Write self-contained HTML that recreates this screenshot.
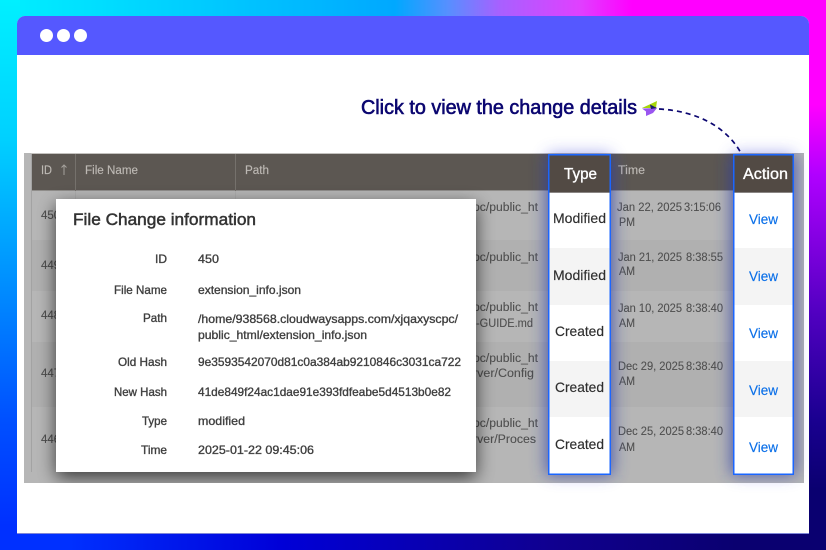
<!DOCTYPE html>
<html><head><meta charset="utf-8"><title>File Change</title>
<style>
html,body{margin:0;padding:0;width:826px;height:550px;overflow:hidden;background:#000}
svg{display:block;position:absolute;left:0;top:0}
text{font-family:"Liberation Sans",sans-serif}
.strip{position:absolute}
.g{fill:#4f4f4f;font-size:11.5px;stroke:#4f4f4f;stroke-width:.1}
.l{fill:#3f3f3f;font-size:12px;stroke:#3f3f3f;stroke-width:.35;text-anchor:end}
.v{fill:#3f3f3f;font-size:12px;stroke:#3f3f3f;stroke-width:.35}
.c{fill:#2e2e2e;font-size:14px;stroke:#2e2e2e;stroke-width:.15}
.w{fill:#0a6fe8;font-size:14px;stroke:#0a6fe8;stroke-width:.15}
.h{fill:#bdb9b4;font-size:11.5px;stroke:#bdb9b4;stroke-width:.15}
</style></head>
<body>
<div class="strip" style="left:0;top:0;width:826px;height:20px;background:linear-gradient(90deg,#00f0ff 0,#00a8ff 395px,#5590ff 447px,#a860ff 500px,#e040ff 580px,#ff00ff 632px,#ff00ff 826px)"></div>
<div class="strip" style="left:0;top:0;width:20px;height:550px;background:linear-gradient(180deg,#00f0ff 0,#00d0ff 140px,#0090ff 280px,#0050ff 420px,#0030ff 526px,#0030ff 550px)"></div>
<div class="strip" style="left:805px;top:0;width:21px;height:550px;background:linear-gradient(180deg,#ff00ff 0,#ff00ff 105px,#b000ff 175px,#5000c0 315px,#1a0090 420px,#0a0070 490px,#0a0070 550px)"></div>
<div class="strip" style="left:0;top:530px;width:826px;height:20px;background:linear-gradient(90deg,#0030ff 0,#0030ff 70px,#0000d8 280px,#100090 550px,#0a0070 737px,#0a0070 826px)"></div>

<svg width="826" height="550" viewBox="0 0 826 550" xmlns="http://www.w3.org/2000/svg">
<defs>
<filter id="m" x="-20%" y="-20%" width="140%" height="140%"><feGaussianBlur stdDeviation="9"/></filter>
<filter id="b" x="-80%" y="-20%" width="260%" height="140%"><feGaussianBlur stdDeviation="8"/></filter>
<clipPath id="panel"><rect x="24" y="153" width="780" height="330"/></clipPath>
</defs>

<!-- window -->
<path d="M17 55V24a8 8 0 0 1 8-8H801a8 8 0 0 1 8 8V534H17Z" fill="#fff"/>
<path d="M17 55V24a8 8 0 0 1 8-8H801a8 8 0 0 1 8 8V55Z" fill="#5558ff"/>
<rect x="17" y="533" width="792" height="1" fill="#7f86d8"/>
<circle cx="46.500" cy="35.500" r="6.500" fill="#fff"/>
<circle cx="63.500" cy="35.500" r="6.500" fill="#fff"/>
<circle cx="80.500" cy="35.500" r="6.500" fill="#fff"/>

<!-- heading -->
<text x="361" y="114" font-size="20" fill="#0b0670" stroke="#0b0670" stroke-width=".6" textLength="276" lengthAdjust="spacingAndGlyphs">Click to view the change details</text>
<path d="M642 108L657 101L656 108Z" fill="#a6d60a"/>
<path d="M642 108.500L657 108L653 113L646 116L646 111.500Z" fill="#9a55f0"/>
<path d="M650 104.500L657 108L651 109Z" fill="#1a1a70"/>
<path d="M659 109C695 111 725 125 741 153" fill="none" stroke="#0b0670" stroke-width="1.700" stroke-dasharray="5 4"/>

<!-- glow outside the panel -->
<rect x="548" y="154" width="63" height="321" fill="#3c46d8" opacity=".5" filter="url(#b)"/>
<rect x="733" y="154" width="61" height="321" fill="#3c46d8" opacity=".5" filter="url(#b)"/>

<!-- table (dimmed) -->
<rect x="24" y="153" width="780" height="330" fill="#b6b6b6"/>
<rect x="31" y="240" width="761" height="51" fill="#b0b0b0"/>
<rect x="31" y="342" width="761" height="65" fill="#b0b0b0"/>
<rect x="31" y="153" width="761" height="1" fill="#c4c2bf"/>
<rect x="31" y="154" width="761" height="37" fill="#5c5752"/>
<rect x="31" y="190" width="761" height="1" fill="#8f8d8a"/>
<rect x="31" y="154" width="1" height="318" fill="#a3a3a3"/>
<rect x="75" y="154" width="1" height="37" fill="#75716c"/>
<rect x="235" y="154" width="1" height="37" fill="#75716c"/>
<rect x="75" y="191" width="1" height="50" fill="#adadad"/>
<rect x="235" y="191" width="1" height="50" fill="#adadad"/>

<text class="h" x="41" y="174" textLength="11" lengthAdjust="spacingAndGlyphs">ID</text>
<path d="M64 175V165M61.500 167.500L64 165L66.500 167.500" fill="none" stroke="#a5a19c" stroke-width="1"/>
<text class="h" x="85" y="174" textLength="53" lengthAdjust="spacingAndGlyphs">File Name</text>
<text class="h" x="245" y="174" textLength="24" lengthAdjust="spacingAndGlyphs">Path</text>
<text class="h" x="618" y="174" textLength="27" lengthAdjust="spacingAndGlyphs">Time</text>

<text class="g" x="41" y="219">450</text>
<text class="g" x="41" y="269">449</text>
<text class="g" x="41" y="319">448</text>
<text class="g" x="41" y="377">447</text>
<text class="g" x="41" y="443">446</text>

<text class="g" x="473" y="211" textLength="65" lengthAdjust="spacingAndGlyphs">pc/public_ht</text>
<text class="g" x="473" y="261" textLength="65" lengthAdjust="spacingAndGlyphs">pc/public_ht</text>
<text class="g" x="473" y="311" textLength="65" lengthAdjust="spacingAndGlyphs">pc/public_ht</text>
<text class="g" x="476" y="327" textLength="57" lengthAdjust="spacingAndGlyphs">-GUIDE.md</text>
<text class="g" x="473" y="362" textLength="65" lengthAdjust="spacingAndGlyphs">pc/public_ht</text>
<text class="g" x="473" y="377" textLength="61" lengthAdjust="spacingAndGlyphs">rver/Config</text>
<text class="g" x="473" y="427" textLength="65" lengthAdjust="spacingAndGlyphs">pc/public_ht</text>
<text class="g" x="473" y="443" textLength="63" lengthAdjust="spacingAndGlyphs">rver/Proces</text>

<text class="g" x="617" y="211" textLength="65" lengthAdjust="spacingAndGlyphs">Jan 22, 2025</text>
<text class="g" x="684" y="211" textLength="37" lengthAdjust="spacingAndGlyphs">3:15:06</text>
<text class="g" x="619" y="226" textLength="16" lengthAdjust="spacingAndGlyphs">PM</text>
<text class="g" x="618" y="261" textLength="64" lengthAdjust="spacingAndGlyphs">Jan 21, 2025</text>
<text class="g" x="686" y="261" textLength="37" lengthAdjust="spacingAndGlyphs">8:38:55</text>
<text class="g" x="619" y="275" textLength="16" lengthAdjust="spacingAndGlyphs">AM</text>
<text class="g" x="618" y="312" textLength="64" lengthAdjust="spacingAndGlyphs">Jan 10, 2025</text>
<text class="g" x="686" y="312" textLength="37" lengthAdjust="spacingAndGlyphs">8:38:40</text>
<text class="g" x="619" y="327" textLength="16" lengthAdjust="spacingAndGlyphs">AM</text>
<text class="g" x="618" y="370" textLength="66" lengthAdjust="spacingAndGlyphs">Dec 29, 2025</text>
<text class="g" x="686" y="370" textLength="37" lengthAdjust="spacingAndGlyphs">8:38:40</text>
<text class="g" x="619" y="385" textLength="16" lengthAdjust="spacingAndGlyphs">AM</text>
<text class="g" x="618" y="435" textLength="66" lengthAdjust="spacingAndGlyphs">Dec 25, 2025</text>
<text class="g" x="686" y="435" textLength="37" lengthAdjust="spacingAndGlyphs">8:38:40</text>
<text class="g" x="619" y="451" textLength="16" lengthAdjust="spacingAndGlyphs">AM</text>

<!-- glow inside the panel -->
<g clip-path="url(#panel)">
<rect x="546" y="154" width="67" height="321" fill="#2c3aa8" opacity=".72" filter="url(#b)"/>
<rect x="731" y="154" width="65" height="321" fill="#2c3aa8" opacity=".72" filter="url(#b)"/>
</g>

<!-- highlighted columns -->
<g>
<rect x="548" y="154" width="63" height="321" fill="#fff"/>
<rect x="549" y="155" width="61" height="37" fill="#524a44"/>
<rect x="549" y="192" width="61" height="1" fill="#8a8684"/>
<rect x="549" y="248" width="61" height="57" fill="#f4f4f4"/>
<rect x="549" y="361" width="61" height="56" fill="#f4f4f4"/>
<rect x="548.750" y="154.750" width="61.500" height="319.500" fill="none" stroke="#1a66ff" stroke-width="1.500"/>
<text x="564" y="179" font-size="16" fill="#fff" stroke="#fff" stroke-width=".35" textLength="33" lengthAdjust="spacingAndGlyphs">Type</text>
<text class="c" x="553" y="223" textLength="53" lengthAdjust="spacingAndGlyphs">Modified</text>
<text class="c" x="553" y="280" textLength="53" lengthAdjust="spacingAndGlyphs">Modified</text>
<text class="c" x="555" y="336" textLength="49" lengthAdjust="spacingAndGlyphs">Created</text>
<text class="c" x="555" y="392" textLength="49" lengthAdjust="spacingAndGlyphs">Created</text>
<text class="c" x="555" y="449" textLength="49" lengthAdjust="spacingAndGlyphs">Created</text>

<rect x="733" y="154" width="61" height="321" fill="#fff"/>
<rect x="734" y="155" width="59" height="37" fill="#524a44"/>
<rect x="734" y="192" width="59" height="1" fill="#8a8684"/>
<rect x="734" y="248" width="59" height="57" fill="#f4f4f4"/>
<rect x="734" y="361" width="59" height="56" fill="#f4f4f4"/>
<rect x="733.750" y="154.750" width="59.500" height="319.500" fill="none" stroke="#1a66ff" stroke-width="1.500"/>
<text x="743" y="179" font-size="16" fill="#fff" stroke="#fff" stroke-width=".35" textLength="45" lengthAdjust="spacingAndGlyphs">Action</text>
<text class="w" x="749" y="224" textLength="29" lengthAdjust="spacingAndGlyphs">View</text>
<text class="w" x="749" y="281" textLength="29" lengthAdjust="spacingAndGlyphs">View</text>
<text class="w" x="749" y="338" textLength="29" lengthAdjust="spacingAndGlyphs">View</text>
<text class="w" x="749" y="395" textLength="29" lengthAdjust="spacingAndGlyphs">View</text>
<text class="w" x="749" y="452" textLength="29" lengthAdjust="spacingAndGlyphs">View</text>
</g>

<!-- modal -->
<g clip-path="url(#panel)"><rect x="56" y="205" width="420" height="273" fill="#000" opacity=".68" filter="url(#m)"/></g>
<rect x="56" y="199" width="420" height="273" fill="#fff"/>
<text x="73" y="225" font-size="17" fill="#333" stroke="#333" stroke-width=".5" textLength="183" lengthAdjust="spacingAndGlyphs">File Change information</text>

<text class="l" x="167" y="263">ID</text>
<text class="l" x="167" y="294" textLength="53" lengthAdjust="spacingAndGlyphs">File Name</text>
<text class="l" x="167" y="322" textLength="24" lengthAdjust="spacingAndGlyphs">Path</text>
<text class="l" x="167" y="366" textLength="49" lengthAdjust="spacingAndGlyphs">Old Hash</text>
<text class="l" x="167" y="396" textLength="53" lengthAdjust="spacingAndGlyphs">New Hash</text>
<text class="l" x="167" y="425" textLength="25" lengthAdjust="spacingAndGlyphs">Type</text>
<text class="l" x="167" y="454" textLength="26" lengthAdjust="spacingAndGlyphs">Time</text>

<text class="v" x="198" y="263" textLength="21" lengthAdjust="spacingAndGlyphs">450</text>
<text class="v" x="198" y="294" textLength="103" lengthAdjust="spacingAndGlyphs">extension_info.json</text>
<text class="v" x="198" y="323" textLength="260" lengthAdjust="spacingAndGlyphs">/home/938568.cloudwaysapps.com/xjqaxyscpc/</text>
<text class="v" x="198" y="339" textLength="169" lengthAdjust="spacingAndGlyphs">public_html/extension_info.json</text>
<text class="v" x="198" y="366" textLength="263" lengthAdjust="spacingAndGlyphs">9e3593542070d81c0a384ab9210846c3031ca722</text>
<text class="v" x="198" y="396" textLength="253" lengthAdjust="spacingAndGlyphs">41de849f24ac1dae91e393fdfeabe5d4513b0e82</text>
<text class="v" x="198" y="425" textLength="47" lengthAdjust="spacingAndGlyphs">modified</text>
<text class="v" x="198" y="454" textLength="116" lengthAdjust="spacingAndGlyphs">2025-01-22 09:45:06</text>
</svg>
</body></html>
